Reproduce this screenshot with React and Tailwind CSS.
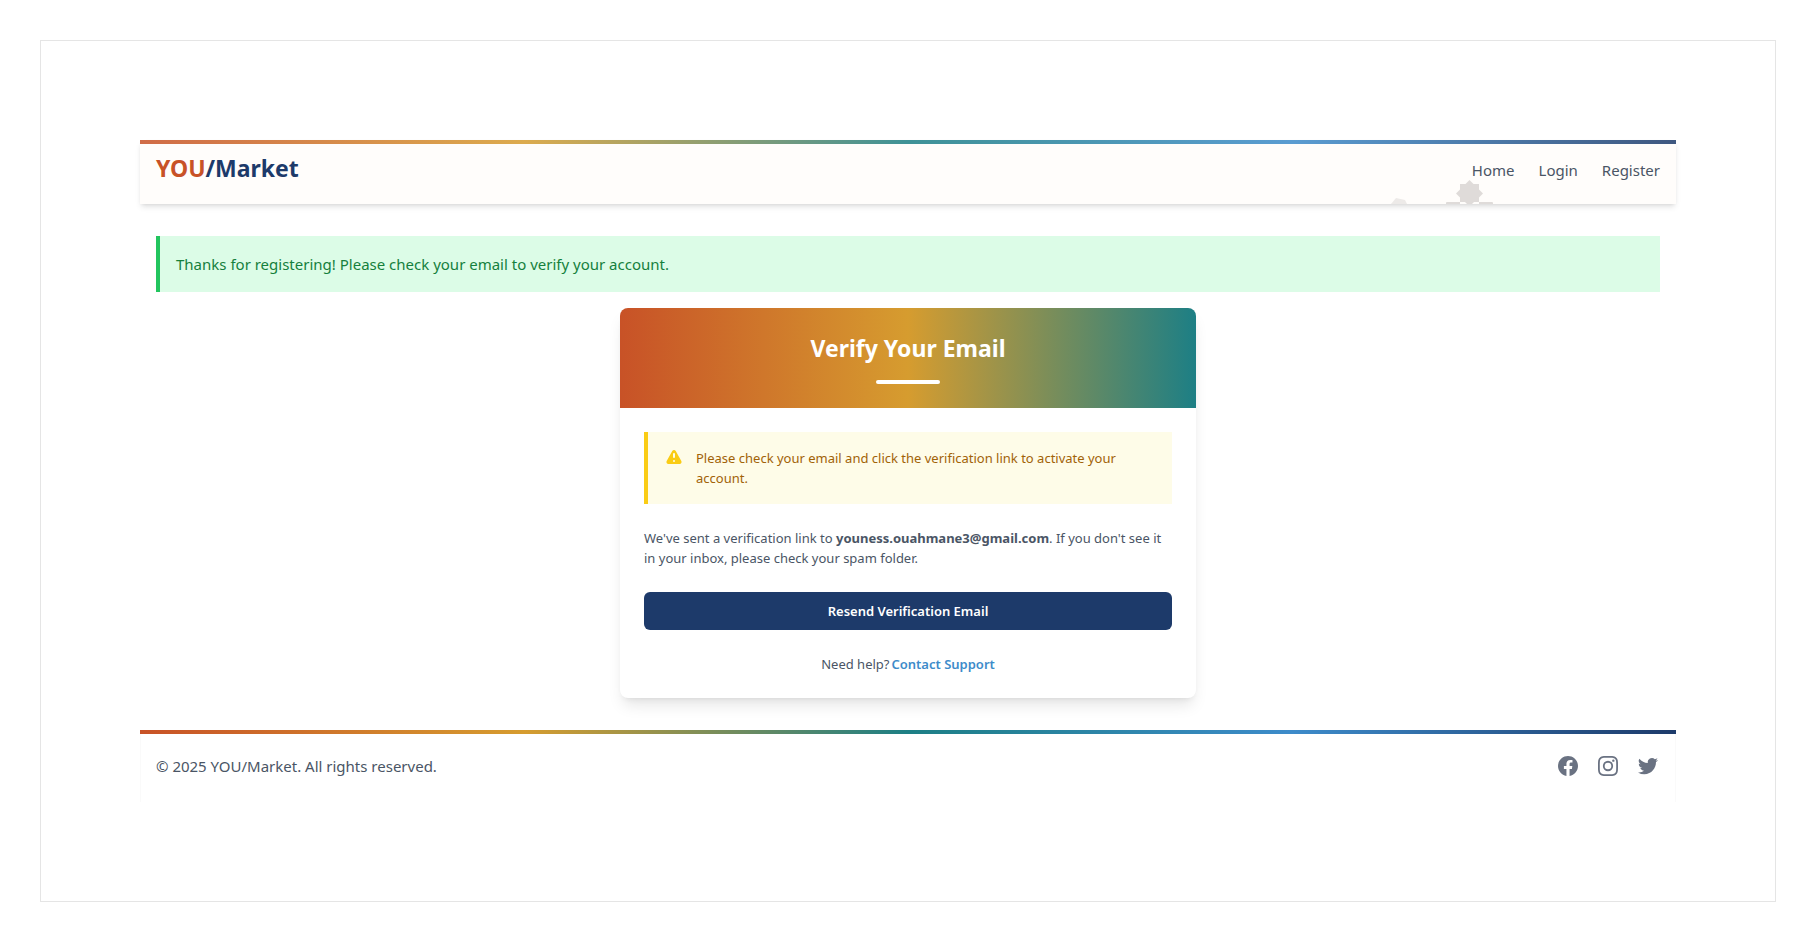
const navLinks = ['Home', 'Login', 'Register'];

const socialIcons = [
  {
    name: 'Facebook',
    d: 'M22 12c0-5.523-4.477-10-10-10S2 6.477 2 12c0 4.991 3.657 9.128 8.438 9.878v-6.987h-2.54V12h2.54V9.797c0-2.506 1.492-3.89 3.777-3.89 1.094 0 2.238.195 2.238.195v2.46h-1.26c-1.243 0-1.63.771-1.63 1.562V12h2.773l-.443 2.89h-2.33v6.988C18.343 21.128 22 16.991 22 12z',
  },
  {
    name: 'Instagram',
    d: 'M12.315 2c2.43 0 2.784.013 3.808.06 1.064.049 1.791.218 2.427.465a4.902 4.902 0 011.772 1.153 4.902 4.902 0 011.153 1.772c.247.636.416 1.363.465 2.427.048 1.067.06 1.407.06 4.123v.08c0 2.643-.012 2.987-.06 4.043-.049 1.064-.218 1.791-.465 2.427a4.902 4.902 0 01-1.153 1.772 4.902 4.902 0 01-1.772 1.153c-.636.247-1.363.416-2.427.465-1.067.048-1.407.06-4.123.06h-.08c-2.643 0-2.987-.012-4.043-.06-1.064-.049-1.791-.218-2.427-.465a4.902 4.902 0 01-1.772-1.153 4.902 4.902 0 01-1.153-1.772c-.247-.636-.416-1.363-.465-2.427-.047-1.024-.06-1.379-.06-3.808v-.63c0-2.43.013-2.784.06-3.808.049-1.064.218-1.791.465-2.427a4.902 4.902 0 011.153-1.772A4.902 4.902 0 015.45 2.525c.636-.247 1.363-.416 2.427-.465C8.901 2.013 9.256 2 11.685 2h.63zm-.081 1.802h-.468c-2.456 0-2.784.011-3.807.058-.975.045-1.504.207-1.857.344-.467.182-.8.398-1.15.748-.35.35-.566.683-.748 1.15-.137.353-.3.882-.344 1.857-.047 1.023-.058 1.351-.058 3.807v.468c0 2.456.011 2.784.058 3.807.045.975.207 1.504.344 1.857.182.466.399.8.748 1.15.35.35.683.566 1.15.748.353.137.882.3 1.857.344 1.054.048 1.37.058 4.041.058h.08c2.597 0 2.917-.01 3.96-.058.976-.045 1.505-.207 1.858-.344.466-.182.8-.398 1.15-.748.35-.35.566-.683.748-1.15.137-.353.3-.882.344-1.857.048-1.055.058-1.37.058-4.041v-.08c0-2.597-.01-2.917-.058-3.96-.045-.976-.207-1.505-.344-1.858a3.097 3.097 0 00-.748-1.15 3.098 3.098 0 00-1.15-.748c-.353-.137-.882-.3-1.857-.344-1.023-.047-1.351-.058-3.807-.058zM12 6.865a5.135 5.135 0 110 10.27 5.135 5.135 0 010-10.27zm0 1.802a3.333 3.333 0 100 6.666 3.333 3.333 0 000-6.666zm5.338-3.205a1.2 1.2 0 110 2.4 1.2 1.2 0 010-2.4z',
  },
  {
    name: 'Twitter',
    d: 'M8.29 20.251c7.547 0 11.675-6.253 11.675-11.675 0-.178 0-.355-.012-.53A8.348 8.348 0 0022 5.92a8.19 8.19 0 01-2.357.646 4.118 4.118 0 001.804-2.27 8.224 8.224 0 01-2.605.996 4.107 4.107 0 00-6.993 3.743 11.65 11.65 0 01-8.457-4.287 4.106 4.106 0 001.27 5.477A4.072 4.072 0 012.8 9.713v.052a4.105 4.105 0 003.292 4.022 4.095 4.095 0 01-1.853.07 4.108 4.108 0 003.834 2.85A8.233 8.233 0 012 18.407a11.616 11.616 0 006.29 1.84',
  },
];

function Header() {
  return (
    <header className="relative bg-[#fffdfb] shadow-md">
      <div className="h-1 bg-[linear-gradient(90deg,#c85227,#d69c2f,#1d7f85,#3d8bca,#1d3a6a)] opacity-85" />
      <svg className="absolute right-[182px] bottom-0 h-6 w-28" viewBox="0 0 112 24" aria-hidden="true">
        <g fill="#dfdbd9">
          <path d="M87.5 0 91.5 4H97V9.5L101 13.5 97 17.5V22H92L90 24H85L83 22H78V17.5L74 13.5 78 9.5V4H83.5Z" />
          <path d="M64 24V23Q64 22 65 22H78V24ZM97 22H110Q111 22 111 23V24H97Z" />
        </g>
        <path fill="#edeae8" d="M9 24 14 18 23 20 25 24Z" />
      </svg>
      <div className="relative flex h-15 items-start justify-between px-4 pt-2">
        <a href="#" className="text-[23px] leading-8 font-bold text-[#1d3a6a]">
          <span className="text-[#c85227]">YOU</span>/Market
        </a>
        <nav className="flex gap-6 leading-9 text-gray-600">
          {navLinks.map((label) => (
            <a key={label} href="#">{label}</a>
          ))}
        </nav>
      </div>
    </header>
  );
}

function VerifyCard() {
  return (
    <section className="mx-auto mt-4 w-full max-w-xl overflow-hidden rounded-lg bg-white shadow-lg">
      <div className="bg-[linear-gradient(90deg,#c85227,#d69c2f,#1d7f85)] py-6 text-center">
        <h1 className="text-[23px] leading-8 font-bold text-white">Verify Your Email</h1>
        <div className="mx-auto mt-4 h-1 w-16 rounded-full bg-white" />
      </div>
      <div className="p-6 text-[13px] leading-5 text-gray-600">
        <div className="flex gap-3 border-l-4 border-[#facc15] bg-[#fefce8] p-4 text-[#a16207]">
          <svg className="size-5 shrink-0 text-[#facc15]" viewBox="0 0 20 20" fill="currentColor" aria-hidden="true">
            <path fillRule="evenodd" clipRule="evenodd" d="M8.257 3.099c.765-1.36 2.722-1.36 3.486 0l5.58 9.92c.75 1.334-.213 2.98-1.742 2.98H4.42c-1.53 0-2.493-1.646-1.743-2.98l5.58-9.92zM11 13a1 1 0 11-2 0 1 1 0 012 0zm-1-8a1 1 0 00-1 1v3a1 1 0 002 0V6a1 1 0 00-1-1z" />
          </svg>
          <p>Please check your email and click the verification link to activate your account.</p>
        </div>
        <p className="mt-6">
          We've sent a verification link to <strong>youness.ouahmane3@gmail.com</strong>. If you don't see it in your inbox, please check your spam folder.
        </p>
        <button type="button" className="mt-6 block w-full rounded-md bg-[#1d3a6a] py-[9px] font-semibold text-white">
          Resend Verification Email
        </button>
        <p className="mt-6 flex justify-center gap-0.5">
          Need help? <a href="#" className="font-semibold text-[#3d8bca]">Contact Support</a>
        </p>
      </div>
    </section>
  );
}

function Footer() {
  return (
    <footer className="mt-8">
      <div className="h-1 bg-[linear-gradient(90deg,#c85227,#d69c2f,#1d7f85,#3d8bca,#1d3a6a)]" />
      <div className="flex items-center justify-between border-x border-[#fafafa] px-[15px] pt-5 pb-6 text-gray-600">
        <p>© 2025 YOU/Market. All rights reserved.</p>
        <div className="flex gap-4 text-gray-500">
          {socialIcons.map((icon) => (
            <a key={icon.name} href="#" aria-label={icon.name}>
              <svg className="size-6" viewBox="0 0 24 24" fill="currentColor" aria-hidden="true">
                <path fillRule="evenodd" d={icon.d} />
              </svg>
            </a>
          ))}
        </div>
      </div>
    </footer>
  );
}

export default function App() {
  return (
    <div className="min-h-screen bg-white p-10 font-['Noto_Sans','Open_Sans',sans-serif] text-[15px] leading-6">
      <div className="border border-[#e5e5e5] px-24 py-[99px]">
        <div className="mx-auto max-w-screen-2xl">
          <Header />
          <main className="px-4 pt-8">
            <div role="status" className="border-l-4 border-[#22c55e] bg-[#dcfce7] p-4 text-[#15803d]">
              Thanks for registering! Please check your email to verify your account.
            </div>
            <VerifyCard />
          </main>
          <Footer />
        </div>
      </div>
    </div>
  );
}
